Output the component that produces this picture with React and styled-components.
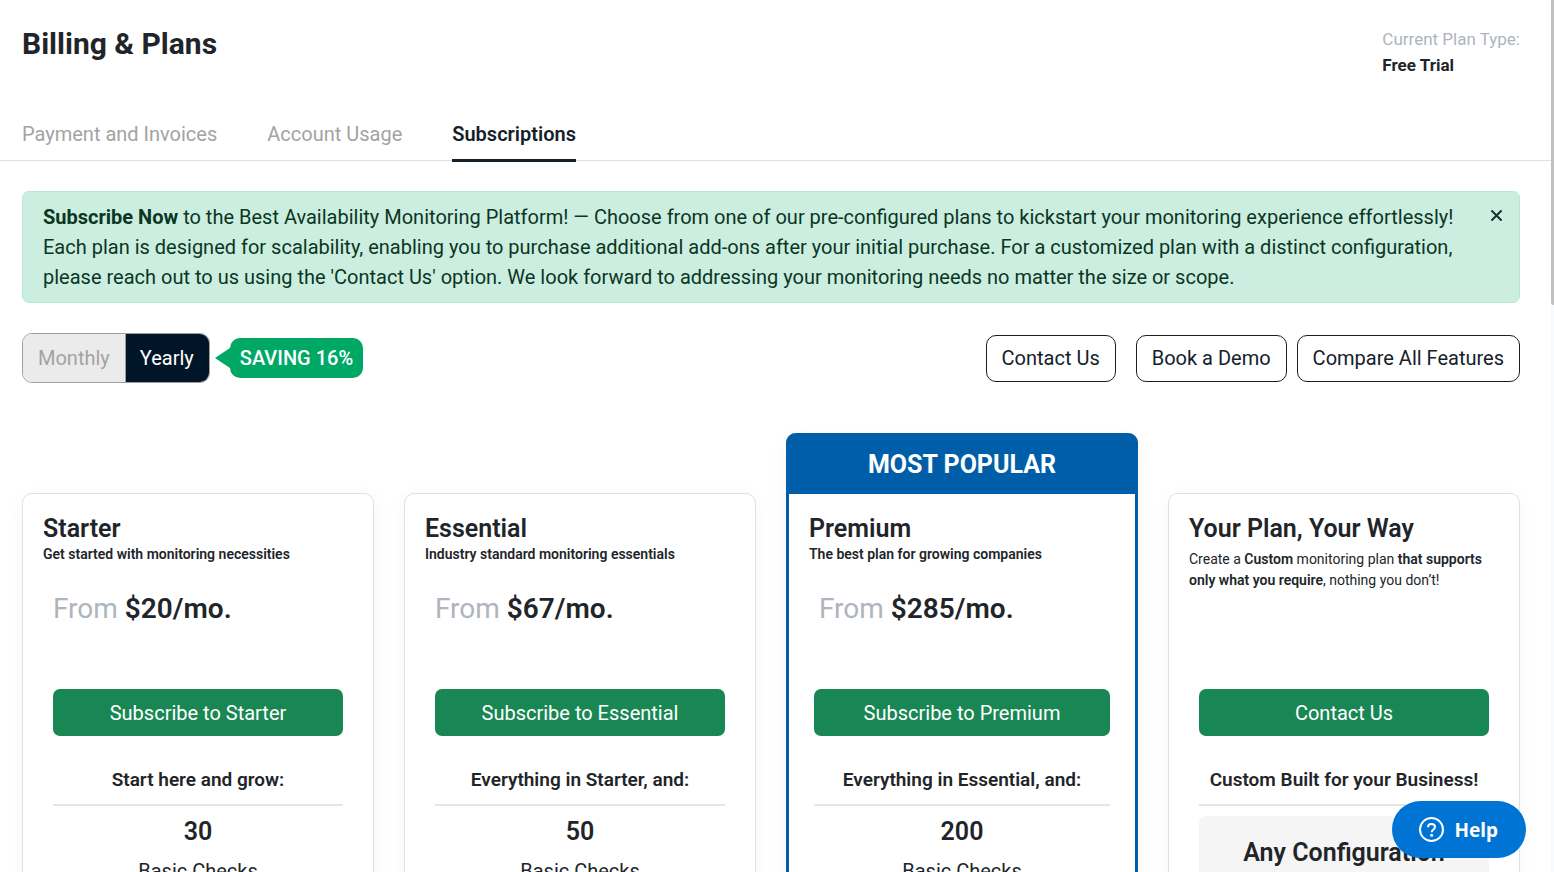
import React, { useState } from "react";
import styled, { createGlobalStyle, css } from "styled-components";

const GlobalStyle = createGlobalStyle`
  *, *::before, *::after { box-sizing: border-box; }
  body {
    margin: 0;
    background: #fff;
    color: #212529;
    font-family: Roboto, "Liberation Sans", sans-serif;
    font-size: 20px;
    line-height: 30px;
  }
  h1, h2, h3, p { margin: 0; }
  button { font: inherit; cursor: pointer; }
`;

const Shell = styled.div`
  display: flex;
  height: 100vh;
`;

const Main = styled.main`
  flex: 1;
  min-width: 0;
  overflow-y: auto;
  scrollbar-width: none;
`;

const ScrollRail = styled.div`
  flex: none;
  width: 3px;
  background: #f8f9fa;
`;

const ScrollThumb = styled.div`
  height: 35%;
  background: #c1c1c1;
  border-radius: 0 0 0 3px;
`;

const Header = styled.header`
  display: flex;
  justify-content: space-between;
  align-items: flex-start;
  padding: 26px 31px 0 22px;
`;

const PageTitle = styled.h1`
  font-size: 30px;
  font-weight: 700;
  line-height: 36px;
`;

const PlanType = styled.div`
  font-size: 17px;
  line-height: 26px;
`;

const PlanLabel = styled.div`
  color: #adb5bd;
`;

const PlanName = styled.div`
  font-weight: 700;
`;

const Tabs = styled.nav`
  display: flex;
  gap: 50px;
  margin-top: 37px;
  padding-left: 22px;
  border-bottom: 1px solid #dee2e6;
`;

const Tab = styled.a`
  padding: 4px 0 10px;
  margin-bottom: -2px;
  border-bottom: 3px solid ${(p) => (p.$active ? "#14212b" : "transparent")};
  color: ${(p) => (p.$active ? "#14212b" : "#a3a3a3")};
  font-weight: ${(p) => (p.$active ? 600 : 400)};
  text-decoration: none;
`;

const Content = styled.div`
  padding: 30px 31px 40px 22px;
`;

const Alert = styled.div`
  display: flex;
  justify-content: space-between;
  align-items: flex-start;
  padding: 10px 16px 10px 20px;
  border: 1px solid #b9e8d3;
  border-radius: 7px;
  background: #cceee0;
  color: #0a3622;
`;

const AlertText = styled.p`
  max-width: 1420px;
  strong { font-weight: 700; }
`;

const CloseButton = styled.button`
  display: flex;
  padding: 7px 0;
  border: 0;
  background: none;
  color: #1f2d2b;
`;

const Toolbar = styled.div`
  display: flex;
  align-items: center;
  height: 50px;
  margin: 30px 0 50px;
`;

const Toggle = styled.div`
  display: flex;
  height: 50px;
  border: 1px solid #9e9e9e;
  border-radius: 10px;
  overflow: hidden;
`;

const ToggleButton = styled.button`
  padding: 0 15px;
  border: 0;
  background: ${(p) => (p.$active ? "#001628" : "#ebebeb")};
  color: ${(p) => (p.$active ? "#fff" : "#a3a3a3")};
  & + & { padding-left: 14px; border-left: 1px solid #9e9e9e; }
`;

const Saving = styled.div`
  position: relative;
  margin-left: 20px;
  padding: 5px 10px;
  border-radius: 10px;
  background: #00a866;
  color: #fff;
  font-weight: 500;
  &::before {
    content: "";
    position: absolute;
    top: 10px;
    left: -15px;
    border: solid transparent;
    border-width: 10px 15px 10px 0;
    border-right-color: #00a866;
  }
`;

const Actions = styled.div`
  display: flex;
  gap: 10px;
  margin-left: auto;
`;

const OutlineButton = styled.button`
  height: 47px;
  padding: 0 15px;
  border: 1px solid #14212b;
  border-radius: 10px;
  background: #fff;
  color: #14212b;
  &:first-child { margin-right: 10px; }
`;

const Plans = styled.section`
  display: grid;
  grid-template-columns: repeat(4, minmax(0, 1fr));
  gap: 30px;
`;

const Card = styled.article`
  margin-top: 60px;
  padding: 20px;
  border: 1px solid #dee2e6;
  border-radius: 10px;
  background: #fff;
  box-shadow: 0 4px 20px rgba(0, 0, 0, 0.04);
  ${(p) =>
    p.$popular &&
    css`
      margin-top: 0;
      padding-top: 0;
      border: 3px solid #005ea8;
      border-top: 0;
    `}
`;

const Banner = styled.div`
  margin: 0 -23px 20px;
  padding: 17px 0 14px;
  border-radius: 10px 10px 0 0;
  background: #005ea8;
  color: #fff;
  font-size: 25px;
  font-weight: 700;
  text-align: center;
`;

const CardHead = styled.div`
  height: 175px;
`;

const CardTitle = styled.h2`
  font-size: 25px;
  font-weight: 600;
  line-height: 30px;
`;

const Tagline = styled.p`
  font-size: 14px;
  font-weight: 600;
  line-height: 20px;
`;

const Description = styled.p`
  margin-top: 5px;
  font-size: 14px;
  line-height: 21px;
  strong { font-weight: 600; }
`;

const Price = styled.p`
  margin-top: 27px;
  padding-left: 10px;
  font-size: 28px;
  font-weight: 600;
  line-height: 36px;
  span { color: #adb5bd; font-weight: 400; }
`;

const CardBody = styled.div`
  padding: 0 ${(p) => (p.$popular ? 5 : 10)}px;
  text-align: center;
`;

const SubscribeButton = styled.button`
  display: block;
  width: 100%;
  height: 47px;
  border: 0;
  border-radius: 7px;
  background: #198754;
  color: #fff;
`;

const Lead = styled.h3`
  margin-top: 29px;
  padding-bottom: 9px;
  border-bottom: 2px solid #e6e6e6;
  font-size: 19px;
  font-weight: 600;
  line-height: 30px;
`;

const Quantity = styled.p`
  margin: 11px 0 9px;
  font-size: 25px;
  font-weight: 600;
`;

const ConfigBox = styled.div`
  margin-top: 10px;
  padding: 22px 10px;
  border-radius: 7px;
  background: #f5f5f5;
  font-size: 25px;
  font-weight: 600;
`;

const HelpButton = styled.button`
  position: fixed;
  right: 28px;
  bottom: 14px;
  display: flex;
  align-items: center;
  gap: 9px;
  height: 57px;
  padding: 0 28px 0 26px;
  border: 0;
  border-radius: 29px;
  background: #0074d4;
  color: #fff;
  font-family: "Noto Sans", sans-serif;
  font-size: 19px;
  font-weight: 700;
`;

const plans = [
  { name: "Starter", tagline: "Get started with monitoring necessities", price: "$20/mo.", action: "Subscribe to Starter", lead: "Start here and grow:", checks: 30 },
  { name: "Essential", tagline: "Industry standard monitoring essentials", price: "$67/mo.", action: "Subscribe to Essential", lead: "Everything in Starter, and:", checks: 50 },
  { name: "Premium", tagline: "The best plan for growing companies", price: "$285/mo.", action: "Subscribe to Premium", lead: "Everything in Essential, and:", checks: 200, popular: true },
];

function PlanCard({ plan }) {
  return (
    <Card $popular={plan.popular}>
      {plan.popular && <Banner>MOST POPULAR</Banner>}
      <CardHead>
        <CardTitle>{plan.name}</CardTitle>
        <Tagline>{plan.tagline}</Tagline>
        <Price><span>From</span> {plan.price}</Price>
      </CardHead>
      <CardBody $popular={plan.popular}>
        <SubscribeButton type="button">{plan.action}</SubscribeButton>
        <Lead>{plan.lead}</Lead>
        <Quantity>{plan.checks}</Quantity>
        <p>Basic Checks</p>
      </CardBody>
    </Card>
  );
}

export default function App() {
  const [yearly, setYearly] = useState(true);
  const [alertOpen, setAlertOpen] = useState(true);

  return (
    <Shell>
      <GlobalStyle />
      <Main>
        <Header>
          <PageTitle>Billing &amp; Plans</PageTitle>
          <PlanType>
            <PlanLabel>Current Plan Type:</PlanLabel>
            <PlanName>Free Trial</PlanName>
          </PlanType>
        </Header>
        <Tabs>
          <Tab href="#payment">Payment and Invoices</Tab>
          <Tab href="#usage">Account Usage</Tab>
          <Tab href="#subscriptions" $active aria-current="page">Subscriptions</Tab>
        </Tabs>
        <Content>
          {alertOpen && (
            <Alert role="status">
              <AlertText>
                <strong>Subscribe Now</strong> to the Best Availability Monitoring Platform! — Choose from one of our
                pre-configured plans to kickstart your monitoring experience effortlessly! Each plan is designed for
                scalability, enabling you to purchase additional add-ons after your initial purchase. For a customized
                plan with a distinct configuration, please reach out to us using the 'Contact Us' option. We look
                forward to addressing your monitoring needs no matter the size or scope.
              </AlertText>
              <CloseButton type="button" aria-label="Close" onClick={() => setAlertOpen(false)}>
                <svg width="13" height="13" viewBox="0 0 13 13" fill="none" stroke="currentColor" strokeWidth="2" strokeLinecap="round">
                  <path d="M2 2l9 9M11 2l-9 9" />
                </svg>
              </CloseButton>
            </Alert>
          )}
          <Toolbar>
            <Toggle>
              <ToggleButton type="button" $active={!yearly} onClick={() => setYearly(false)}>Monthly</ToggleButton>
              <ToggleButton type="button" $active={yearly} onClick={() => setYearly(true)}>Yearly</ToggleButton>
            </Toggle>
            <Saving>SAVING 16%</Saving>
            <Actions>
              <OutlineButton type="button">Contact Us</OutlineButton>
              <OutlineButton type="button">Book a Demo</OutlineButton>
              <OutlineButton type="button">Compare All Features</OutlineButton>
            </Actions>
          </Toolbar>
          <Plans>
            {plans.map((plan) => <PlanCard key={plan.name} plan={plan} />)}
            <Card>
              <CardHead>
                <CardTitle>Your Plan, Your Way</CardTitle>
                <Description>
                  Create a <strong>Custom</strong> monitoring plan <strong>that supports only what you require</strong>,
                  nothing you don’t!
                </Description>
              </CardHead>
              <CardBody>
                <SubscribeButton type="button">Contact Us</SubscribeButton>
                <Lead>Custom Built for your Business!</Lead>
                <ConfigBox>Any Configuration</ConfigBox>
              </CardBody>
            </Card>
          </Plans>
        </Content>
      </Main>
      <ScrollRail aria-hidden="true"><ScrollThumb /></ScrollRail>
      <HelpButton type="button">
        <svg width="27" height="27" viewBox="0 0 27 27" fill="none" stroke="#fff" strokeWidth="2" aria-hidden="true">
          <circle cx="13.5" cy="13.5" r="11.5" />
          <path d="M10 11.2c0-2 1.5-3.3 3.5-3.3s3.5 1.2 3.5 3.1c0 2.4-3.3 2.6-3.3 5.2" />
          <circle cx="13.6" cy="19.3" r="1.5" fill="#fff" stroke="none" />
        </svg>
        Help
      </HelpButton>
    </Shell>
  );
}
